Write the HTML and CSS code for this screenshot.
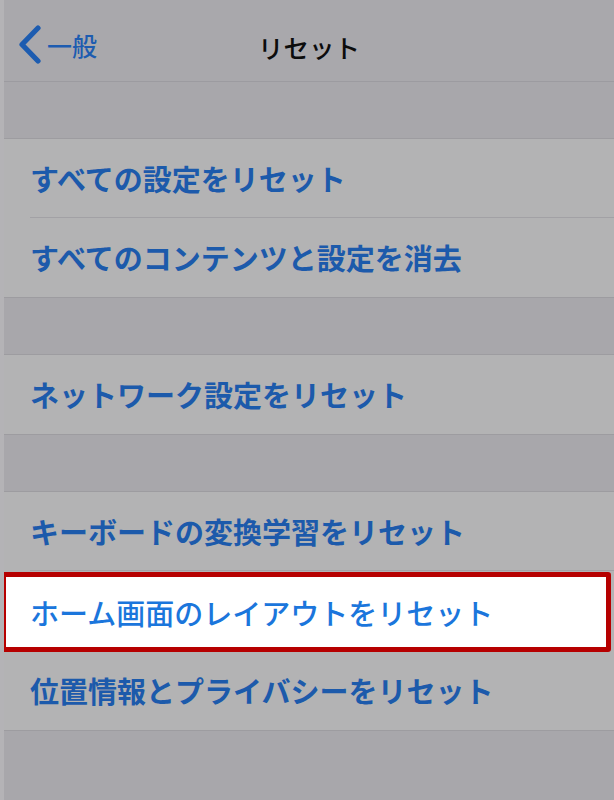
FILE: index.html
```html
<!DOCTYPE html>
<html lang="ja">
<head>
<meta charset="utf-8">
<title>リセット</title>
<link rel="stylesheet" href="styles.css">
</head>
<body>
<div class="screen">
  <header class="nav">
    <a class="back">
      <svg class="chev" width="26" height="40" viewBox="0 0 26 40"><path d="M21 3 L5 19.5 L21 36" fill="none" stroke="#1d5cb0" stroke-width="5.2" stroke-linecap="round" stroke-linejoin="round"/></svg>
      <span class="back-label">一般</span>
    </a>
    <h1 class="title">リセット</h1>
  </header>
  <div class="spacer"></div>
  <section class="group">
    <div class="row"><span class="label">すべての設定をリセット</span></div>
    <div class="row last"><span class="label">すべてのコンテンツと設定を消去</span></div>
  </section>
  <div class="spacer"></div>
  <section class="group">
    <div class="row last"><span class="label">ネットワーク設定をリセット</span></div>
  </section>
  <div class="spacer"></div>
  <section class="group">
    <div class="row"><span class="label">キーボードの変換学習をリセット</span></div>
    <div class="row hl"><span class="label">ホーム画面のレイアウトをリセット</span></div>
    <div class="row last"><span class="label">位置情報とプライバシーをリセット</span></div>
  </section>
  <div class="spacer fill"></div>
</div>
</body>
</html>
```
FILE: styles.css
```css
html, body {
  margin: 0;
  padding: 0;
  height: 100%;
  background: #a8a7ab;
}
body {
  font-family: "Noto Sans CJK JP", "Noto Sans", sans-serif;
}
.screen {
  display: flex;
  flex-direction: column;
  min-height: 800px;
  border-left: 4px solid #b4b3b6;
  box-shadow: inset 1px 0 0 #9b9a9e;
  overflow: hidden;
}
.nav {
  position: relative;
  height: 81px;
  border-bottom: 1px solid #9c9ba0;
  background: #a9a8ac;
  display: flex;
  align-items: center;
}
.back {
  display: flex;
  align-items: center;
  gap: 4px;
  margin-left: 13px;
  margin-top: 9px;
}
.chev { display: block; }
.back-label {
  color: #1d5cb0;
  font-size: 25px;
  font-weight: 500;
  line-height: 1;
}
.title {
  position: absolute;
  left: 0;
  right: 0;
  top: 0;
  height: 81px;
  margin: 0;
  display: flex;
  align-items: center;
  justify-content: center;
  font-size: 25.5px;
  font-weight: 500;
  color: #0c0c0c;
  padding-top: 12px;
  box-sizing: border-box;
}
.spacer {
  height: 56px;
  background: #a8a7ab;
}
.spacer.fill { flex: 1; }
.group {
  background: #b3b3b4;
  border-top: 1px solid #9d9ca0;
  border-bottom: 1px solid #9d9ca0;
}
.row {
  height: 79px;
  display: flex;
  align-items: center;
  padding-left: 26px;
  position: relative;
  box-sizing: border-box;
}
.row::after {
  content: "";
  position: absolute;
  left: 26px;
  right: 0;
  bottom: 0;
  height: 1px;
  background: #a2a1a5;
}
.row.last::after { display: none; }
.label {
  color: #1c5aab;
  font-size: 29px;
  font-weight: 700;
  line-height: 1;
  white-space: nowrap;
}
.row.hl {
  background: #ffffff;
  border: 5px solid #b60000;
  border-radius: 3px;
  margin: 1px 3px -1px -3px;
  padding-left: 24px;
  height: 80px;
}
.row.hl::after { display: none; }
.row.hl .label {
  color: #1b76dc;
  font-weight: 500;
}
```
